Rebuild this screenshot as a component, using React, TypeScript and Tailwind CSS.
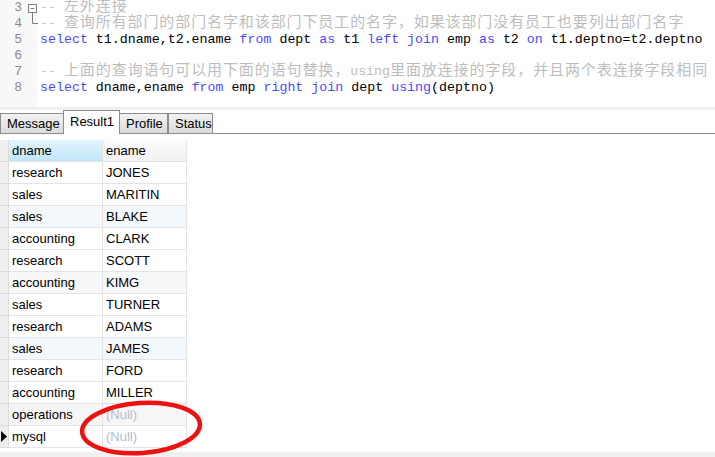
import React from 'react';

const mono = { fontFamily: '"Liberation Mono", "Noto Sans CJK SC", monospace' };
const ui = { fontFamily: '"Liberation Sans", "Noto Sans CJK SC", sans-serif' };

type Tok = { t: string; k?: 'kw' | 'cm' | 'cj' };

// split a comment into latin / CJK runs so the wide chars get their own size
function comment(text: string): Tok[] {
  const out: Tok[] = [];
  for (const part of text.split(/([\u3000-\u9fff\uff00-\uffef]+)/)) {
    if (!part) continue;
    out.push({ t: part, k: /[\u3000-\u9fff\uff00-\uffef]/.test(part) ? 'cj' : 'cm' });
  }
  return out;
}

const kw = (t: string): Tok => ({ t, k: 'kw' });
const tx = (t: string): Tok => ({ t });

const lines: { n: number; toks: Tok[] }[] = [
  { n: 3, toks: comment('-- 左外连接') },
  { n: 4, toks: comment('-- 查询所有部门的部门名字和该部门下员工的名字，如果该部门没有员工也要列出部门名字') },
  {
    n: 5,
    toks: [
      kw('select'), tx(' t1.dname,t2.ename '), kw('from'), tx(' dept '), kw('as'), tx(' t1 '),
      kw('left'), tx(' '), kw('join'), tx(' emp '), kw('as'), tx(' t2 '), kw('on'), tx(' t1.deptno=t2.deptno'),
    ],
  },
  { n: 6, toks: [] },
  { n: 7, toks: comment('-- 上面的查询语句可以用下面的语句替换，using里面放连接的字段，并且两个表连接字段相同') },
  {
    n: 8,
    toks: [
      kw('select'), tx(' dname,ename '), kw('from'), tx(' emp '), kw('right'), tx(' '), kw('join'),
      tx(' dept '), kw('using'), tx('(deptno)'),
    ],
  },
];

const rows: [string, string | null][] = [
  ['research', 'JONES'],
  ['sales', 'MARITIN'],
  ['sales', 'BLAKE'],
  ['accounting', 'CLARK'],
  ['research', 'SCOTT'],
  ['accounting', 'KIMG'],
  ['sales', 'TURNER'],
  ['research', 'ADAMS'],
  ['sales', 'JAMES'],
  ['research', 'FORD'],
  ['accounting', 'MILLER'],
  ['operations', null],
  ['mysql', null],
];

const rowBg = ['bg-white', 'bg-white', 'bg-[#f3f8fd]', 'bg-white', 'bg-white', 'bg-[#f6f7f8]', 'bg-white', 'bg-white', 'bg-[#f3f8fd]', 'bg-white', 'bg-white', 'bg-[#f6f6f6]', 'bg-white'];

function Editor() {
  return (
    <div className="flex h-[107px] bg-white text-[13px]" style={mono}>
      <div className="relative w-[37px] shrink-0 bg-[#f8f8f8]">
        {lines.map((l) => (
          <div key={l.n} className="h-4 w-[22px] text-right leading-4 text-[#8a8a8a]">
            {l.n}
          </div>
        ))}
        <svg className="absolute left-[27px] top-[3px]" width="11" height="23" viewBox="0 0 11 23">
          <rect x="1.5" y="1.5" width="8" height="8" fill="white" stroke="#808080" />
          <line x1="3.5" y1="5.5" x2="7.5" y2="5.5" stroke="#808080" />
          <line x1="5.5" y1="9.5" x2="5.5" y2="20.5" stroke="#808080" />
          <line x1="5.5" y1="20.5" x2="11" y2="20.5" stroke="#808080" />
        </svg>
      </div>
      <div className="pl-[3px] text-[13.3px]">
        {lines.map((l) => (
          <div key={l.n} className="h-4 whitespace-pre leading-4 text-black">
            {l.toks.map((t, i) =>
              t.k === 'kw' ? (
                <span key={i} className="text-[#4c4cf5]">{t.t}</span>
              ) : t.k === 'cm' ? (
                <span key={i} className="text-[#bdbdbd]">{t.t}</span>
              ) : t.k === 'cj' ? (
                <span key={i} className="text-[15px] tracking-[0.9px] text-[#bdbdbd]">{t.t}</span>
              ) : (
                <span key={i}>{t.t}</span>
              )
            )}
          </div>
        ))}
      </div>
    </div>
  );
}

function Tabs() {
  const tab = 'h-[21px] px-[6px] border border-[#8c8c8c] bg-gradient-to-b from-[#f2f2f2] to-[#dcdcdc] leading-[19px] text-black';
  return (
    <div className="flex h-[24px] items-end text-[13px]" style={ui}>
      <div className={`${tab} w-[63px] border-r-0`}>Message</div>
      <div className="h-[24px] w-[57px] border border-b-0 border-[#8c8c8c] bg-white px-[6px] pt-[1px] leading-[19px] text-black">
        Result1
      </div>
      <div className={`${tab} w-[48px] border-l-0`}>Profile</div>
      <div className={`${tab} w-[45px] border-l-[#8c8c8c]`}>Status</div>
      <div className="flex-1 self-end border-b border-[#8c8c8c]" />
    </div>
  );
}

function Grid() {
  const cell = 'border-b border-r border-[#e4e4e4] pl-[3px] leading-[21px]';
  return (
    <div className="pt-[6px] text-[13px]" style={ui}>
      <div className="flex h-[22px]">
        <div className="w-[9px] border-b border-r border-[#dcdcdc] bg-[#efefef]" />
        <div className={`${cell} w-[94px] bg-gradient-to-b from-[#e2f5fd] to-[#bfe6f7] text-black`}>dname</div>
        <div className={`${cell} w-[84px] bg-gradient-to-b from-[#fbfbfb] to-[#f1f1f1] text-black`}>ename</div>
      </div>
      {rows.map(([d, e], i) => (
        <div key={i} className="flex h-[22px]">
          <div className="relative w-[9px] border-b border-r border-[#dcdcdc] bg-[#efefef]">
            {i === rows.length - 1 && (
              <svg className="absolute left-[1px] top-[5px]" width="7" height="11" viewBox="0 0 7 11">
                <path d="M0 0 L6 5.5 L0 11 Z" fill="black" />
              </svg>
            )}
          </div>
          <div className={`${cell} ${rowBg[i]} w-[94px] text-black`}>{d}</div>
          <div className={`${cell} ${rowBg[i]} w-[84px] ${e ? 'text-black' : 'text-[#b4bccb]'}`}>{e ?? '(Null)'}</div>
        </div>
      ))}
    </div>
  );
}

export default function App() {
  return (
    <div className="relative flex h-[457px] w-[715px] flex-col overflow-hidden bg-white">
      <Editor />
      <div className="h-[3px] bg-[#f0f0f0]" />
      <Tabs />
      <Grid />
      <div className="mt-auto h-[5px] bg-[#f0f0f0]" />
      {/* red annotation ring */}
      <svg className="pointer-events-none absolute left-0 top-0" width="715" height="457">
        <ellipse cx="141" cy="428" rx="59" ry="25" fill="none" stroke="#ee1111" strokeWidth="4.5" transform="rotate(-4 141 428)" />
      </svg>
    </div>
  );
}
